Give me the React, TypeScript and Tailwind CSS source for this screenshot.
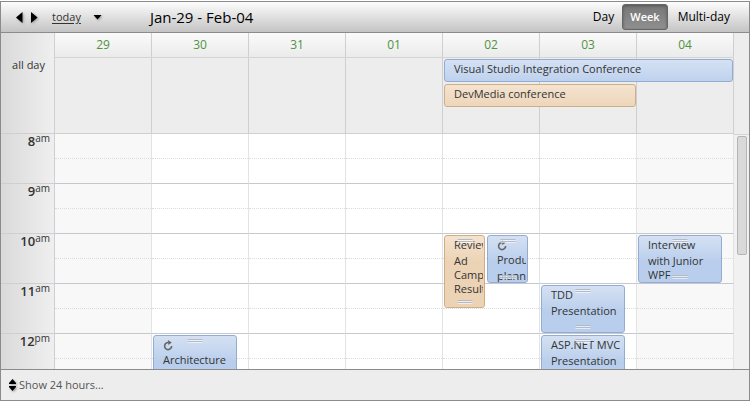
import clsx from 'clsx';

type Tone = 'blue' | 'orange';

type CalendarEvent = {
    title: string;
    tone: Tone;
    size: string;
    recurring?: boolean;
};

type Slot = {
    day: string;
    top: string;
    events: CalendarEvent[];
};

const days = ['29', '30', '31', '01', '02', '03', '04'];
const weekend = ['29', '04'];

const hours = [
    { hour: '8', suffix: 'am' },
    { hour: '9', suffix: 'am' },
    { hour: '10', suffix: 'am' },
    { hour: '11', suffix: 'am' },
    { hour: '12', suffix: 'pm' },
];

const slots: Slot[] = [
    {
        day: '30',
        top: 'top-[201px]',
        events: [{ title: 'Architecture', tone: 'blue', size: 'h-[73px]', recurring: true }],
    },
    {
        day: '02',
        top: 'top-[101px]',
        events: [
            { title: 'Review Ad Campaign Results', tone: 'orange', size: 'h-[73px]' },
            { title: 'Product planning', tone: 'blue', size: 'h-12', recurring: true },
        ],
    },
    {
        day: '03',
        top: 'top-[151px]',
        events: [{ title: 'TDD Presentation', tone: 'blue', size: 'h-12' }],
    },
    {
        day: '03',
        top: 'top-[201px]',
        events: [{ title: 'ASP.NET MVC Presentation', tone: 'blue', size: 'h-[73px]' }],
    },
    {
        day: '04',
        top: 'top-[101px]',
        events: [{ title: 'Interview with Junior WPF', tone: 'blue', size: 'h-12' }],
    },
];

const tones: Record<Tone, string> = {
    blue: 'border-[#94acd2] bg-linear-to-b from-[#d5e1f3] to-[#b9ceec] to-[26px]',
    orange: 'border-[#cfae87] bg-linear-to-b from-[#f4e3cf] to-[#ecd3b5] to-[26px]',
};

function RecurIcon() {
    return (
        <svg className="block h-4 w-3" viewBox="0 0 12 16" fill="none">
            <path d="M5.5 6.6A3.5 3.5 0 1 0 8.6 10" stroke="#666" strokeWidth="1.6" />
            <path d="M4.8 4L8.8 6.6L5.4 9Z" fill="#666" />
        </svg>
    );
}

function Grip({ className }: { className: string }) {
    return (
        <span className={clsx('absolute left-1/2 w-[15px] -translate-x-1/2', className)}>
            <span className="block h-0.5 border-t border-b border-t-[#b3bac6] border-b-white/60" />
            <span className="block h-0.5 border-t border-b border-t-[#b3bac6] border-b-white/60" />
        </span>
    );
}

function EventCard({ event }: { event: CalendarEvent }) {
    return (
        <div
            className={clsx(
                'relative min-w-0 flex-1 overflow-hidden rounded-[3px] border',
                tones[event.tone],
                event.size
            )}
        >
            <div
                className={clsx(
                    'mr-px h-full overflow-hidden pl-[9px] text-[11px]',
                    event.recurring ? 'leading-4' : 'leading-[14px] first-line:leading-[18px]'
                )}
            >
                {event.recurring && <RecurIcon />}
                {event.title}
            </div>
            <Grip className="top-[3px]" />
            <Grip className="bottom-[3px]" />
        </div>
    );
}

function AllDayEvent({ title, tone, span }: { title: string; tone: Tone; span: string }) {
    return (
        <div
            className={clsx(
                'mx-px h-[23px] truncate rounded-[3px] border pl-[9px] text-[11px] leading-[18px]',
                tones[tone],
                span
            )}
        >
            {title}
        </div>
    );
}

function Toolbar() {
    return (
        <header className="flex h-[31px] items-center border-b border-[#8b8b8b] bg-linear-to-b from-[#fdfdfd] to-[#c4c4c4] pr-[9px] pl-[14px]">
            <button aria-label="Previous week" className="h-4 w-[10px]">
                <svg className="h-[11px] w-2 drop-shadow-[1px_1px_1px_#999]" viewBox="0 0 8 11">
                    <path d="M7.5 0V11L1 5.5Z" />
                </svg>
            </button>
            <button aria-label="Next week" className="ml-[5px] h-4 w-[10px]">
                <svg className="h-[11px] w-2 drop-shadow-[1px_1px_1px_#999]" viewBox="0 0 8 11">
                    <path d="M1 0V11L7.5 5.5Z" />
                </svg>
            </button>
            <a href="#today" className="ml-3 text-[11px] underline underline-offset-2">
                today
            </a>
            <button aria-label="Pick a date" className="ml-3 h-4 w-[9px]">
                <svg className="h-[5px] w-[9px] drop-shadow-[1px_1px_1px_#999]" viewBox="0 0 9 5">
                    <path d="M0.5 0H8.5L4.5 4.5Z" />
                </svg>
            </button>
            <h1 className="ml-12 text-[15px] text-black">Jan-29 - Feb-04</h1>
            <div className="ml-auto flex items-center text-xs text-black">
                <button className="px-2">Day</button>
                <button className="h-[26px] rounded-[3px] border border-[#666] bg-linear-to-b from-[#777] to-[#909090] px-[7px] text-[11px] font-semibold text-white shadow-[inset_0_1px_3px_#555]">
                    Week
                </button>
                <button className="px-[10px]">Multi-day</button>
            </div>
        </header>
    );
}

export default function App() {
    return (
        <div className="pt-px pr-px font-['Open_Sans','Noto_Sans',sans-serif] text-[#333]">
            <div className="border border-[#8b8b8b] bg-[#ededed]">
                <Toolbar />

                {/* Day numbers */}
                <div className="flex h-[25px]">
                    <div className="w-[54px] shrink-0 border-r border-[#cfcfcf] bg-linear-to-r from-[#dadada] to-[#efefef]" />
                    <div className="grid grow grid-cols-7 border-b border-[#d4d4d4] bg-linear-to-b from-[#fafafa] to-[#ebebeb]">
                        {days.map((day) => (
                            <div
                                key={day}
                                className="border-r border-[#cfcfcf] text-center text-xs leading-6 text-[#4f9343]"
                            >
                                {day}
                            </div>
                        ))}
                    </div>
                    <div className="w-[15px] shrink-0" />
                </div>

                {/* All day */}
                <div className="flex h-[76px]">
                    <div className="w-[54px] shrink-0 border-r border-b border-[#cfcfcf] bg-linear-to-r from-[#dadada] to-[#efefef] pr-[9px] text-right text-[11px] leading-[14px]">
                        all day
                    </div>
                    <div className="relative grow">
                        <div className="grid h-full grid-cols-7">
                            {days.map((day) => (
                                <div key={day} className="border-r border-b border-[#cfcfcf]" />
                            ))}
                        </div>
                        <div className="absolute inset-x-0 top-px grid grid-cols-7 gap-y-0.5">
                            <AllDayEvent
                                title="Visual Studio Integration Conference"
                                tone="blue"
                                span="col-start-5 col-span-3"
                            />
                            <AllDayEvent
                                title="DevMedia conference"
                                tone="orange"
                                span="col-start-5 col-span-2"
                            />
                        </div>
                    </div>
                    <div className="w-[15px] shrink-0" />
                </div>

                {/* Hours */}
                <div className="flex h-[235px] overflow-hidden">
                    <div className="w-[54px] shrink-0 border-r border-[#cfcfcf] bg-linear-to-r from-[#dadada] to-[#efefef]">
                        {hours.map(({ hour, suffix }) => (
                            <div
                                key={hour}
                                className="flex h-[50px] justify-end border-b border-[#cfcfcf] pr-1"
                            >
                                <span className="text-[13px] leading-[14px] font-semibold">{hour}</span>
                                <span className="text-[10px] leading-2">{suffix}</span>
                            </div>
                        ))}
                    </div>
                    <div className="grid grow grid-cols-7">
                        {days.map((day) => (
                            <div key={day} className="relative">
                                {hours.map(({ hour }) => (
                                    <div
                                        key={hour}
                                        className={clsx(
                                            'h-[50px] border-r border-r-[#e3e3e3] border-b border-b-[#c6c7cf]',
                                            weekend.includes(day) ? 'bg-[#f8f8f8]' : 'bg-white'
                                        )}
                                    >
                                        <div className="h-[25px] border-b border-dotted border-[#dcdcdc]" />
                                    </div>
                                ))}
                                {slots
                                    .filter((slot) => slot.day === day)
                                    .map((slot) => (
                                        <div
                                            key={slot.top}
                                            className={clsx(
                                                'absolute right-3 left-px flex items-start gap-0.5',
                                                slot.top
                                            )}
                                        >
                                            {slot.events.map((event) => (
                                                <EventCard key={event.title} event={event} />
                                            ))}
                                        </div>
                                    ))}
                            </div>
                        ))}
                    </div>
                    <div className="w-[15px] shrink-0 border-t border-[#d4d4d4] bg-[#f1f1f1] pt-px pr-0.5 pl-[3px]">
                        <div className="h-[119px] rounded-[2px] border border-[#b5b5b5] bg-[#d9d9d9]" />
                    </div>
                </div>

                <footer className="flex h-[31px] items-center border-t border-[#8b8b8b] pl-2">
                    <button className="flex items-center gap-[3px] text-[11px] text-[#555]">
                        <svg
                            className="h-3 w-[7px] drop-shadow-[1px_1px_1px_#999]"
                            viewBox="0 0 7 12"
                            fill="#000"
                        >
                            <path d="M3.5 0L7 4V5H0V4Z" />
                            <path d="M0 7H7V8L3.5 12L0 8Z" />
                        </svg>
                        Show 24 hours...
                    </button>
                </footer>
            </div>
        </div>
    );
}
